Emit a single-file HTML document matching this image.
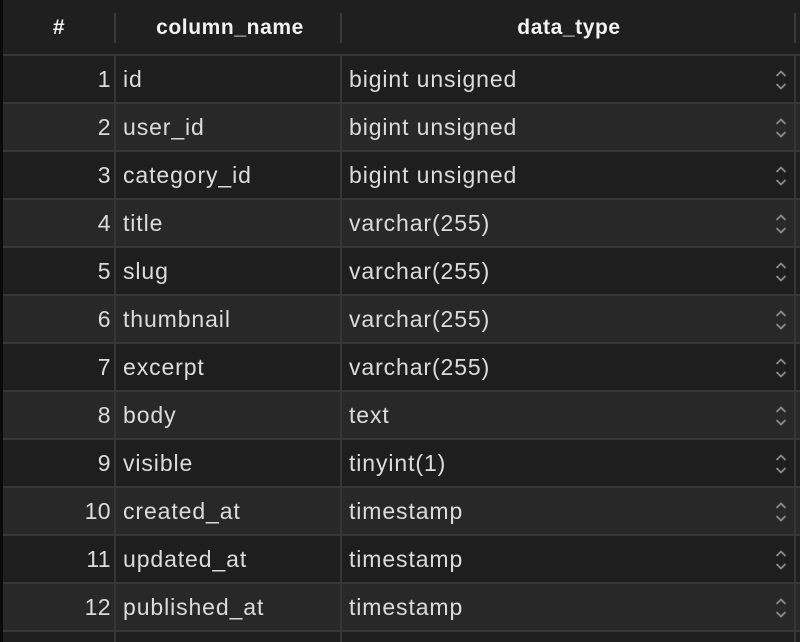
<!DOCTYPE html>
<html><head><style>
body{margin:0;width:800px;height:642px;overflow:hidden;background:#1e1e1e;font-family:"Liberation Sans",Helvetica,sans-serif;position:relative}
.l{position:absolute;left:0;top:0;width:3px;height:642px;background:#0a0a0a}
.hd{position:absolute;left:3px;top:0;width:797px;height:54px;background:#1f1f1f;border-bottom:2px solid #363636}
.hd div{position:absolute;top:16px;color:#f2f2f2;font-weight:bold;font-size:21px;letter-spacing:0.6px;text-align:center}
.hs{position:absolute;top:13px;width:2px;height:30px;background:#3a3a3a}
.r{position:absolute;left:3px;width:797px;height:46px;border-bottom:2px solid #363636}
.r span{position:absolute;top:10px;color:#dcdcdc;font-size:23px;letter-spacing:0.9px}
.n{right:689px;text-align:right;letter-spacing:0.4px!important}
.c{left:120px}
.t{left:346px}
.v{position:absolute;top:0;width:2px;height:642px;background:#363636}
svg{position:absolute;right:12px;top:13px}
</style></head><body>
<div class="hd">
<div style="left:0;width:112px">#</div>
<div style="left:114px;width:226px">column_name</div>
<div style="left:340px;width:452px">data_type</div>
</div>
<div class="r" style="top:56px;background:#1e1e1e"><span class="n">1</span><span class="c">id</span><span class="t">bigint unsigned</span><svg width="14" height="22"><path d="M2.5 7 L7 2.5 L11.5 7 M2.5 15 L7 19.5 L11.5 15" stroke="#8a8a8a" stroke-width="1.8" fill="none"/></svg></div>
<div class="r" style="top:104px;background:#282828"><span class="n">2</span><span class="c">user_id</span><span class="t">bigint unsigned</span><svg width="14" height="22"><path d="M2.5 7 L7 2.5 L11.5 7 M2.5 15 L7 19.5 L11.5 15" stroke="#8a8a8a" stroke-width="1.8" fill="none"/></svg></div>
<div class="r" style="top:152px;background:#1e1e1e"><span class="n">3</span><span class="c">category_id</span><span class="t">bigint unsigned</span><svg width="14" height="22"><path d="M2.5 7 L7 2.5 L11.5 7 M2.5 15 L7 19.5 L11.5 15" stroke="#8a8a8a" stroke-width="1.8" fill="none"/></svg></div>
<div class="r" style="top:200px;background:#282828"><span class="n">4</span><span class="c">title</span><span class="t">varchar(255)</span><svg width="14" height="22"><path d="M2.5 7 L7 2.5 L11.5 7 M2.5 15 L7 19.5 L11.5 15" stroke="#8a8a8a" stroke-width="1.8" fill="none"/></svg></div>
<div class="r" style="top:248px;background:#1e1e1e"><span class="n">5</span><span class="c">slug</span><span class="t">varchar(255)</span><svg width="14" height="22"><path d="M2.5 7 L7 2.5 L11.5 7 M2.5 15 L7 19.5 L11.5 15" stroke="#8a8a8a" stroke-width="1.8" fill="none"/></svg></div>
<div class="r" style="top:296px;background:#282828"><span class="n">6</span><span class="c">thumbnail</span><span class="t">varchar(255)</span><svg width="14" height="22"><path d="M2.5 7 L7 2.5 L11.5 7 M2.5 15 L7 19.5 L11.5 15" stroke="#8a8a8a" stroke-width="1.8" fill="none"/></svg></div>
<div class="r" style="top:344px;background:#1e1e1e"><span class="n">7</span><span class="c">excerpt</span><span class="t">varchar(255)</span><svg width="14" height="22"><path d="M2.5 7 L7 2.5 L11.5 7 M2.5 15 L7 19.5 L11.5 15" stroke="#8a8a8a" stroke-width="1.8" fill="none"/></svg></div>
<div class="r" style="top:392px;background:#282828"><span class="n">8</span><span class="c">body</span><span class="t">text</span><svg width="14" height="22"><path d="M2.5 7 L7 2.5 L11.5 7 M2.5 15 L7 19.5 L11.5 15" stroke="#8a8a8a" stroke-width="1.8" fill="none"/></svg></div>
<div class="r" style="top:440px;background:#1e1e1e"><span class="n">9</span><span class="c">visible</span><span class="t">tinyint(1)</span><svg width="14" height="22"><path d="M2.5 7 L7 2.5 L11.5 7 M2.5 15 L7 19.5 L11.5 15" stroke="#8a8a8a" stroke-width="1.8" fill="none"/></svg></div>
<div class="r" style="top:488px;background:#282828"><span class="n">10</span><span class="c">created_at</span><span class="t">timestamp</span><svg width="14" height="22"><path d="M2.5 7 L7 2.5 L11.5 7 M2.5 15 L7 19.5 L11.5 15" stroke="#8a8a8a" stroke-width="1.8" fill="none"/></svg></div>
<div class="r" style="top:536px;background:#1e1e1e"><span class="n">11</span><span class="c">updated_at</span><span class="t">timestamp</span><svg width="14" height="22"><path d="M2.5 7 L7 2.5 L11.5 7 M2.5 15 L7 19.5 L11.5 15" stroke="#8a8a8a" stroke-width="1.8" fill="none"/></svg></div>
<div class="r" style="top:584px;background:#282828"><span class="n">12</span><span class="c">published_at</span><span class="t">timestamp</span><svg width="14" height="22"><path d="M2.5 7 L7 2.5 L11.5 7 M2.5 15 L7 19.5 L11.5 15" stroke="#8a8a8a" stroke-width="1.8" fill="none"/></svg></div>
<div class="v" style="left:114px;top:56px;height:586px"></div>
<div class="v" style="left:340px;top:56px;height:586px"></div>
<div class="v" style="left:794px;top:56px;height:586px"></div>
<div class="hs" style="left:114px"></div>
<div class="hs" style="left:340px"></div>
<div class="hs" style="left:794px"></div>
<div class="l"></div>
</body></html>
